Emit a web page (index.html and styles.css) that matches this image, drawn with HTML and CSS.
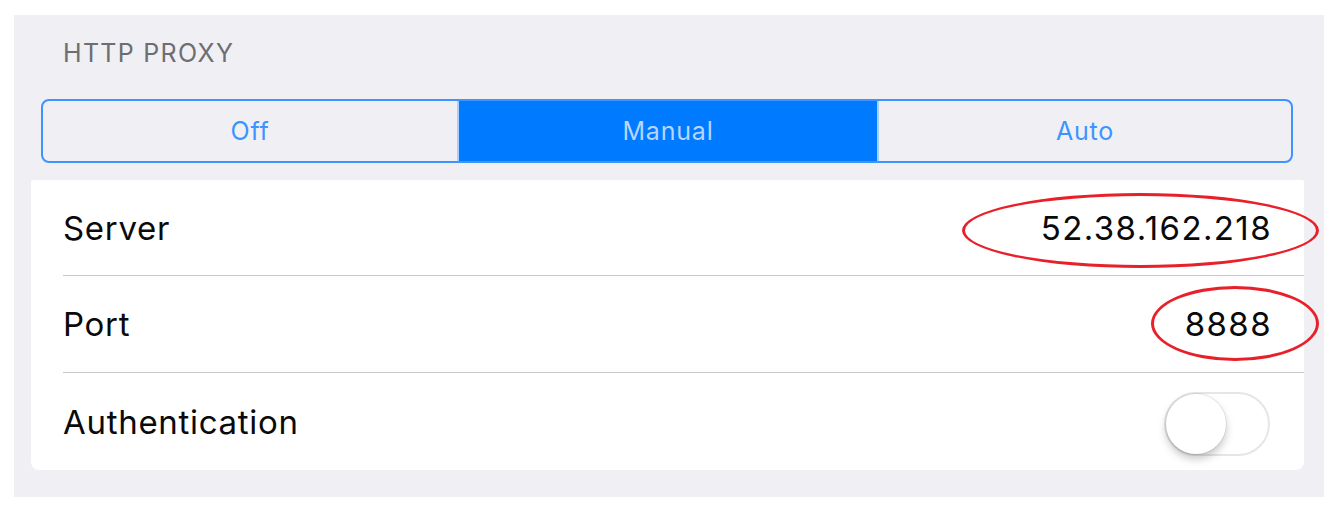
FILE: index.html
```html
<!DOCTYPE html>
<html>
<head>
<meta charset="utf-8">
<link rel="stylesheet" href="styles.css">
</head>
<body>
<div class="panel">
  <div class="section-title">HTTP PROXY</div>
  <div class="segmented">
    <div class="seg seg-off">Off</div>
    <div class="seg seg-active">Manual</div>
    <div class="seg seg-auto">Auto</div>
  </div>
  <div class="card">
    <div class="row">
      <div class="row-inner">
        <span class="label">Server</span>
        <span class="value">52.38.162.218</span>
      </div>
    </div>
    <div class="row">
      <div class="row-inner">
        <span class="label">Port</span>
        <span class="value">8888</span>
      </div>
    </div>
    <div class="row">
      <div class="row-inner last">
        <span class="label">Authentication</span>
        <span class="toggle"><span class="knob"></span></span>
      </div>
    </div>
  </div>
</div>
<div class="mark mark-server"></div>
<div class="mark mark-port"></div>
</body>
</html>
```
FILE: styles.css
```css
html, body {
  margin: 0;
  padding: 0;
  background: #ffffff;
}
body {
  width: 1340px;
  height: 512px;
  position: relative;
  font-family: Inter, "Liberation Sans", sans-serif;
  overflow: hidden;
}
.panel {
  margin: 15px 0 0 14px;
  width: 1310px;
  height: 482px;
  background: #efeff4;
  display: flex;
  flex-direction: column;
  box-sizing: border-box;
}
.section-title {
  font-size: 25px;
  line-height: 30px;
  color: #6d6d72;
  padding: 23px 0 0 49px;
  height: 61px;
  box-sizing: border-box;
  letter-spacing: 1.3px;
}
.segmented {
  margin: 23px 0 0 27px;
  width: 1252px;
  height: 64px;
  box-sizing: border-box;
  border: 2px solid #3d94ff;
  border-radius: 8px;
  display: flex;
  overflow: hidden;
}
.seg {
  display: flex;
  align-items: center;
  justify-content: center;
  color: #3d94ff;
  font-size: 25px;
  letter-spacing: 0.8px;
  box-sizing: border-box;
}
.seg-off {
  width: 414px;
}
.seg-active {
  width: 420px;
  background: #007aff;
  color: #b6d6ff;
  border-left: 2px solid #a9cfff;
}
.seg-auto {
  flex: 1;
  border-left: 2px solid #a9cfff;
}
.card {
  margin: 17px 0 0 17px;
  width: 1273px;
  background: #ffffff;
  border-radius: 2px 2px 8px 8px;
  display: flex;
  flex-direction: column;
}
.row {
  padding-left: 32px;
  height: 96px;
}
.row + .row {
  height: 97px;
}
.row-inner {
  height: 100%;
  box-sizing: border-box;
  border-bottom: 1.5px solid #c8c7cc;
  padding-right: 33px;
  display: flex;
  align-items: center;
  justify-content: space-between;
  color: #0a0a0a;
  font-size: 33px;
}
.row-inner.last {
  border-bottom: none;
  padding-right: 34px;
}
.label {
  letter-spacing: 0.7px;
}
.value {
  letter-spacing: 1.4px;
  margin-right: -1px;
}
.toggle {
  width: 106px;
  height: 64px;
  box-sizing: border-box;
  border: 2px solid #e6e6e6;
  border-radius: 32px;
  background: #ffffff;
  position: relative;
  margin-top: 4px;
}
.knob {
  position: absolute;
  left: 0;
  top: 0;
  width: 60px;
  height: 60px;
  border-radius: 50%;
  background: #ffffff;
  box-shadow: 0 5px 8px rgba(0,0,0,0.22), 0 0 0 1px rgba(0,0,0,0.07);
}
.mark {
  position: absolute;
  border: 3px solid #e8202a;
  border-radius: 50%;
  box-sizing: border-box;
}
.mark-server {
  left: 962px;
  top: 193px;
  width: 357px;
  height: 75px;
}
.mark-port {
  left: 1151px;
  top: 286px;
  width: 168px;
  height: 75px;
}
```
